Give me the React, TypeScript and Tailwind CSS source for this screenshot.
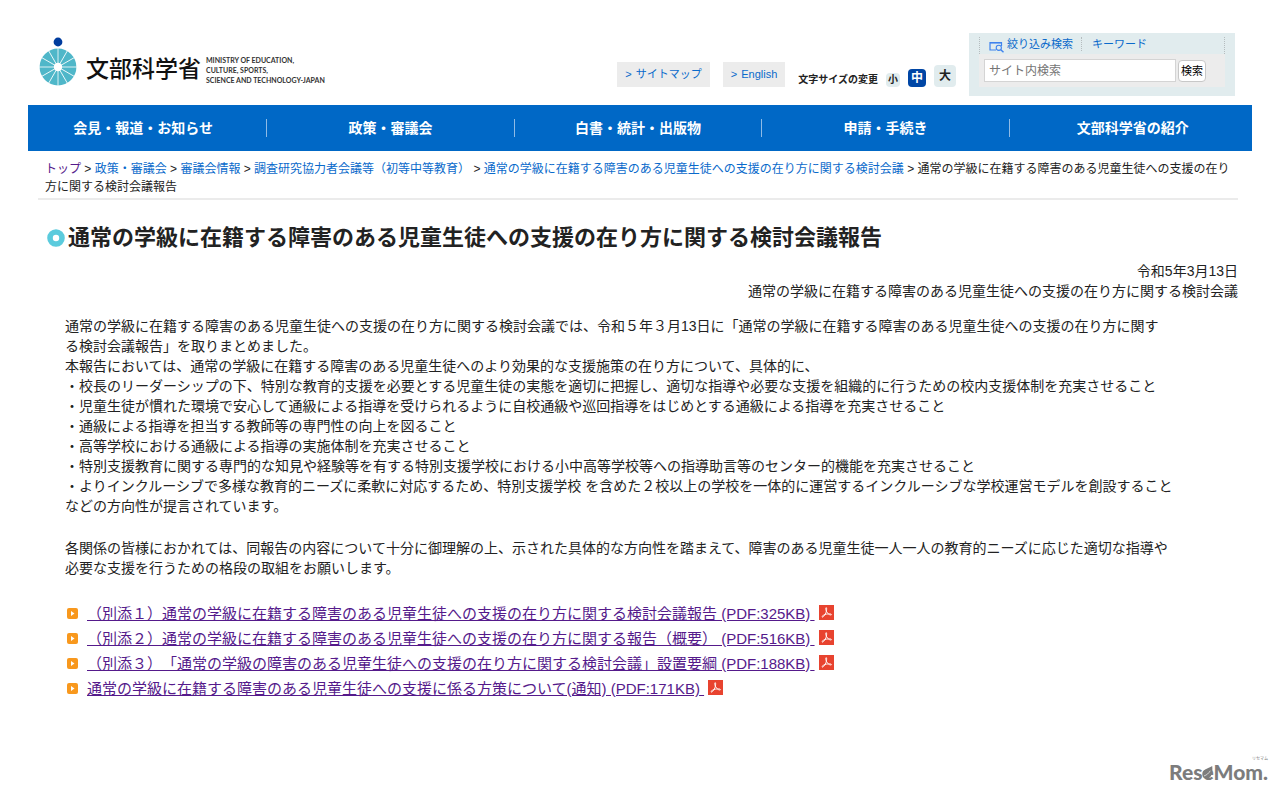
import type { ReactNode } from "react";

const NAV_ITEMS = ["会見・報道・お知らせ", "政策・審議会", "白書・統計・出版物", "申請・手続き", "文部科学省の紹介"];

const CRUMBS = [
  { label: "トップ", visited: true },
  { label: "政策・審議会" },
  { label: "審議会情報" },
  { label: "調査研究協力者会議等（初等中等教育）" },
  { label: "通常の学級に在籍する障害のある児童生徒への支援の在り方に関する検討会議" },
];

const DOCUMENTS = [
  "（別添１）通常の学級に在籍する障害のある児童生徒への支援の在り方に関する検討会議報告 (PDF:325KB)",
  "（別添２）通常の学級に在籍する障害のある児童生徒への支援の在り方に関する報告（概要） (PDF:516KB)",
  "（別添３）「通常の学級の障害のある児童生徒への支援の在り方に関する検討会議」設置要綱 (PDF:188KB)",
  "通常の学級に在籍する障害のある児童生徒への支援に係る方策について(通知) (PDF:171KB)",
];

const SPOKES = [0, 30, 60, 90, 120, 150, 180, 210, 240, 270, 300, 330];

function Logo() {
  return (
    <a href="#" className="flex items-end text-[#111]">
      <svg viewBox="0 0 38 50" className="h-[50px] w-[38px]" aria-hidden="true">
        <circle cx="19" cy="5" r="4.4" fill="#003c9e" />
        <circle cx="19" cy="30" r="18.4" fill="#4fb7c9" />
        {SPOKES.map((angle) => (
          <line key={angle} x1="19" y1="30" x2="19" y2="11" stroke="#fff" strokeWidth="0.8" transform={`rotate(${angle} 19 30)`} />
        ))}
        <circle cx="19" cy="30" r="4.2" fill="#fff" />
      </svg>
      <span className="ml-[9px] text-[23px] leading-9 font-medium">文部科学省</span>
      <span className="ml-[5px] pb-[2px] font-['Lato'] text-[7px] leading-[10px] font-bold text-[#333]">
        MINISTRY OF EDUCATION,
        <br />
        CULTURE, SPORTS,
        <br />
        SCIENCE AND TECHNOLOGY-JAPAN
      </span>
    </a>
  );
}

function UtilityLink({ children }: { children: ReactNode }) {
  return (
    <a href="#" className="flex gap-1 bg-[#ececec] px-2 text-[11px] leading-[25px] text-[#0a6acb]">
      <span>&gt;</span>
      {children}
    </a>
  );
}

function SizeSwitch() {
  return (
    <div className="flex items-end">
      <span className="mr-2 text-[10px] leading-[14px] font-bold">文字サイズの変更</span>
      <button type="button" className="size-[14px] rounded bg-[#e1ecee] text-[10px] leading-[14px] font-bold">
        小
      </button>
      <button type="button" className="ml-2 size-[18px] rounded bg-[#0046a5] text-[12px] leading-[18px] font-bold text-white">
        中
      </button>
      <button type="button" className="ml-2 size-[22px] rounded bg-[#e1ecee] text-[12px] leading-[22px] font-bold">
        大
      </button>
    </div>
  );
}

function SearchBox() {
  return (
    <form className="w-[266px] bg-[#e1ecee] px-[10px] pt-1 pb-[9px]" onSubmit={(e) => e.preventDefault()}>
      <div className="flex h-[17px] items-start border-r border-l border-dotted border-[#b5bcbe] text-[11px] leading-[14px] text-[#0a6acb]">
        <a href="#" className="flex items-start pl-[9px]">
          <svg viewBox="0 0 16 12" className="mt-1 mr-[2px] h-3 w-4" fill="none" aria-hidden="true">
            <path d="M12.5 5V1.5H1v7.5h6" stroke="#3f83ee" strokeWidth="1.2" />
            <path d="M1 1.8h11.5" stroke="#3f83ee" strokeWidth="1.6" />
            <circle cx="9.8" cy="6.8" r="2.6" stroke="#3f83ee" strokeWidth="1.1" />
            <path d="M11.8 8.8l2.7 2.5" stroke="#3f83ee" strokeWidth="1.5" />
          </svg>
          絞り込み検索
        </a>
        <a href="#" className="ml-2 border-l border-dotted border-[#b5bcbe] pl-[10px]">
          キーワード
        </a>
      </div>
      <div className="flex items-center gap-[2px] bg-[#ececec] px-[5px] py-[5px]">
        <input
          type="text"
          aria-label="サイト内検索"
          placeholder="サイト内検索"
          className="h-[23px] w-[192px] border border-[#d4d4d4] bg-white px-1 text-xs placeholder:text-[#757575]"
        />
        <button type="submit" className="h-[22px] w-7 rounded-sm border border-[#c8c8c8] bg-white text-[11px] leading-5 text-black">
          検索
        </button>
      </div>
    </form>
  );
}

function PdfIcon() {
  return (
    <svg viewBox="0 0 15 15" className="mb-[3px] ml-1 size-[15px]" aria-hidden="true">
      <rect width="15" height="15" fill="#e8432f" />
      <path
        d="M7.1 2.600c.8 0 .6 2 .3 3.500-.5 2-1.600 4-2.700 5.200-.7.800-1.500 1-1.700.6-.3-.6 1.200-1.700 3.100-2.400 1.900-.6 4.300-.9 5.600-.5 1 .3.900 1.100.1 1-1.400 0-3.200-1.500-4.100-3.100C6.800 5.400 6.300 2.600 7.100 2.600z"
        fill="none"
        stroke="#fff"
        strokeWidth="0.9"
      />
    </svg>
  );
}

function BulletIcon() {
  return (
    <svg viewBox="0 0 11 11" className="mr-[9px] size-[11px]" aria-hidden="true">
      <rect width="11" height="11" rx="2" fill="#f8981d" />
      <path d="M4 3l3.500 2.500L4 8z" fill="#fff" />
    </svg>
  );
}

function Watermark() {
  return (
    <div className="absolute right-3 bottom-[11px] flex flex-col items-end text-[#7c7c7c]" aria-hidden="true">
      <span className="text-[4px] leading-[4px]">リセマム</span>
      <span className="relative font-['Lato'] text-[21px] leading-[21px] font-black">
        ReseMom.
        <svg viewBox="0 0 14 15" className="absolute top-[5px] left-[33px] h-[13px] w-[11px]" preserveAspectRatio="none">
          <path d="M13 0C14 8 12 13.500 7 14.500 2 15 0 12 .5 8 1.200 4 7 3.500 13 0z" fill="#7c7c7c" />
          <path d="M2.500 11.500C6 10.500 8.500 8.500 10.500 5.500" stroke="#fff" strokeWidth="0.8" fill="none" />
        </svg>
      </span>
    </div>
  );
}

export default function App() {
  return (
    <div className="relative min-h-screen bg-white px-7 pt-[33px] font-['Liberation_Sans','Noto_Sans_CJK_JP',sans-serif] text-[#222] [text-spacing-trim:space-all]">
      <header>
        <div className="flex items-start pr-[17px] pb-[9px] pl-[11px]">
          <div className="pt-1">
            <Logo />
          </div>
          <div className="mr-[13px] ml-auto flex h-[54px] items-end gap-[13px]">
            <UtilityLink>サイトマップ</UtilityLink>
            <UtilityLink>English</UtilityLink>
            <SizeSwitch />
          </div>
          <SearchBox />
        </div>
        <nav className="bg-[#0068c6] py-[14px]">
          <ul className="-mr-1 -ml-2 flex">
            {NAV_ITEMS.map((item) => (
              <li key={item} className="flex-1 border-r border-[#8fbbe6] text-center text-sm leading-[18px] font-bold text-white last:border-0">
                <a href="#">{item}</a>
              </li>
            ))}
          </ul>
        </nav>
      </header>

      <nav className="mr-[14px] ml-[10px] border-b-2 border-[#ebebeb] pt-[9px] pb-[2px] pl-[7px] text-xs leading-[18px]">
        {CRUMBS.map((crumb) => (
          <span key={crumb.label}>
            <a href="#" className={crumb.visited ? "text-[#551a8b]" : "text-[#0a6acb]"}>
              {crumb.label}
            </a>
            {" > "}
          </span>
        ))}
        通常の学級に在籍する障害のある児童生徒への支援の在り方に関する検討会議報告
      </nav>

      <main className="mr-[14px] ml-[19px]">
        <h1 className="mt-[22px] flex items-center text-[22px] leading-8 font-bold">
          <svg viewBox="0 0 18 18" className="mr-[3px] size-[18px]" aria-hidden="true">
            <circle cx="9" cy="9" r="6" fill="none" stroke="#5bcbdd" strokeWidth="5.600" />
          </svg>
          通常の学級に在籍する障害のある児童生徒への支援の在り方に関する検討会議報告
        </h1>

        <div className="mt-[7px] text-right text-sm leading-5">
          <p>令和5年3月13日</p>
          <p>通常の学級に在籍する障害のある児童生徒への支援の在り方に関する検討会議</p>
        </div>

        <div className="mt-[15px] ml-[18px] text-sm leading-5">
          <p>
            通常の学級に在籍する障害のある児童生徒への支援の在り方に関する検討会議では、令和５年３月13日に「通常の学級に在籍する障害のある児童生徒への支援の在り方に関す
            <br />
            る検討会議報告」を取りまとめました。
            <br />
            本報告においては、通常の学級に在籍する障害のある児童生徒へのより効果的な支援施策の在り方について、具体的に、
            <br />
            ・校長のリーダーシップの下、特別な教育的支援を必要とする児童生徒の実態を適切に把握し、適切な指導や必要な支援を組織的に行うための校内支援体制を充実させること
            <br />
            ・児童生徒が慣れた環境で安心して通級による指導を受けられるように自校通級や巡回指導をはじめとする通級による指導を充実させること
            <br />
            ・通級による指導を担当する教師等の専門性の向上を図ること
            <br />
            ・高等学校における通級による指導の実施体制を充実させること
            <br />
            ・特別支援教育に関する専門的な知見や経験等を有する特別支援学校における小中高等学校等への指導助言等のセンター的機能を充実させること
            <br />
            ・よりインクルーシブで多様な教育的ニーズに柔軟に対応するため、特別支援学校 を含めた２校以上の学校を一体的に運営するインクルーシブな学校運営モデルを創設すること
            <br />
            などの方向性が提言されています。
          </p>
          <p className="mt-[22px]">
            各関係の皆様におかれては、同報告の内容について十分に御理解の上、示された具体的な方向性を踏まえて、障害のある児童生徒一人一人の教育的ニーズに応じた適切な指導や
            <br />
            必要な支援を行うための格段の取組をお願いします。
          </p>
        </div>

        <ul className="mt-[23px] ml-5 text-[15px] leading-[25px]">
          {DOCUMENTS.map((title) => (
            <li key={title} className="flex items-center">
              <BulletIcon />
              <a href="#" className="text-[#551a8b] underline">
                {title}&nbsp;
              </a>
              <PdfIcon />
            </li>
          ))}
        </ul>
      </main>

      <Watermark />
    </div>
  );
}
